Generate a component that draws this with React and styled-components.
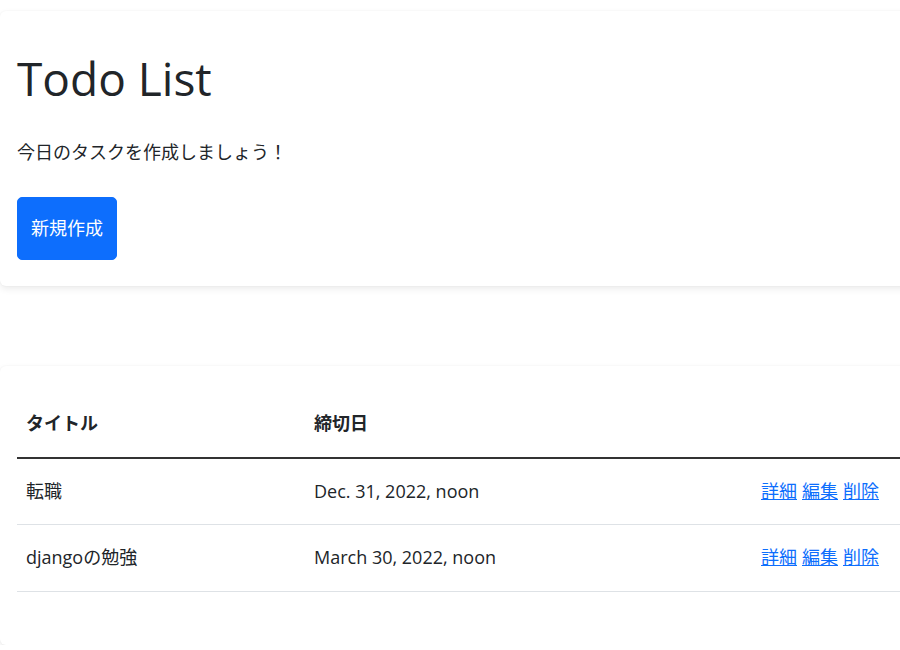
import styled, { createGlobalStyle } from 'styled-components';

const GlobalStyle = createGlobalStyle`
  html, body {
    margin: 0;
    overflow: hidden;
    background: #fff;
  }
  body {
    font-family: "Open Sans", "Noto Sans CJK JP", sans-serif;
    font-size: 18px;
    line-height: 1.5;
    color: #212529;
  }
`;

const todos = [
  { id: 1, title: '転職', deadline: 'Dec. 31, 2022, noon' },
  { id: 2, title: 'djangoの勉強', deadline: 'March 30, 2022, noon' },
];

const App = () => (
  <>
    <GlobalStyle />
    <Page>
      <HeroCard>
        <Title>Todo List</Title>
        <Lead>今日のタスクを作成しましょう！</Lead>
        <PrimaryButton type="button">新規作成</PrimaryButton>
      </HeroCard>

      <ListCard>
        <Table>
          <colgroup>
            <col style={{ width: 288 }} />
            <col style={{ width: 447 }} />
            <col />
          </colgroup>
          <thead>
            <tr>
              <HeadCell>タイトル</HeadCell>
              <HeadCell>締切日</HeadCell>
              <HeadCell />
            </tr>
          </thead>
          <tbody>
            {todos.map((todo) => (
              <tr key={todo.id}>
                <Cell>{todo.title}</Cell>
                <Cell>{todo.deadline}</Cell>
                <Cell>
                  <Actions>
                    <ActionLink href="#">詳細</ActionLink>
                    <ActionLink href="#">編集</ActionLink>
                    <ActionLink href="#">削除</ActionLink>
                  </Actions>
                </Cell>
              </tr>
            ))}
          </tbody>
        </Table>
      </ListCard>
    </Page>
  </>
);

export default App;

const Page = styled.div`
  width: 940px;
  padding-top: 11px;
  display: flex;
  flex-direction: column;
  gap: 80px;
`;

const Card = styled.section`
  background: #fff;
  border-radius: 6px;
  box-shadow: 0 0 2px rgba(0, 0, 0, 0.05), 0 3px 7px rgba(0, 0, 0, 0.08);
`;

const HeroCard = styled(Card)`
  display: flex;
  flex-direction: column;
  align-items: flex-start;
  padding: 37px 17px 26px;
`;

const Title = styled.h1`
  margin: 0 0 32px;
  font-size: 46px;
  font-weight: 400;
  line-height: 60px;
  color: #212529;
`;

const Lead = styled.p`
  margin: 0 0 31px;
  font-size: 18px;
  line-height: 25.5px;
`;

const PrimaryButton = styled.button`
  font-family: inherit;
  font-size: 18px;
  line-height: 25.5px;
  padding: 18px 13px;
  color: #fff;
  background: #0d6efd;
  border: 1px solid #0d6efd;
  border-radius: 5px;
  cursor: pointer;
`;

const ListCard = styled(Card)`
  padding: 25px 17px 53px;
`;

const Table = styled.table`
  width: 100%;
  table-layout: fixed;
  border-collapse: collapse;
`;

const HeadCell = styled.th`
  padding: 20px 9px;
  text-align: left;
  font-weight: 700;
  line-height: 25.5px;
  border-bottom: 2px solid #333;
`;

const Cell = styled.td`
  padding: 20px 9px;
  line-height: 25.5px;
  border-bottom: 1px solid #dee2e6;
  white-space: nowrap;
`;

const Actions = styled.div`
  display: flex;
  gap: 5px;
`;

const ActionLink = styled.a`
  color: #0d6efd;
  text-decoration: underline;
`;
